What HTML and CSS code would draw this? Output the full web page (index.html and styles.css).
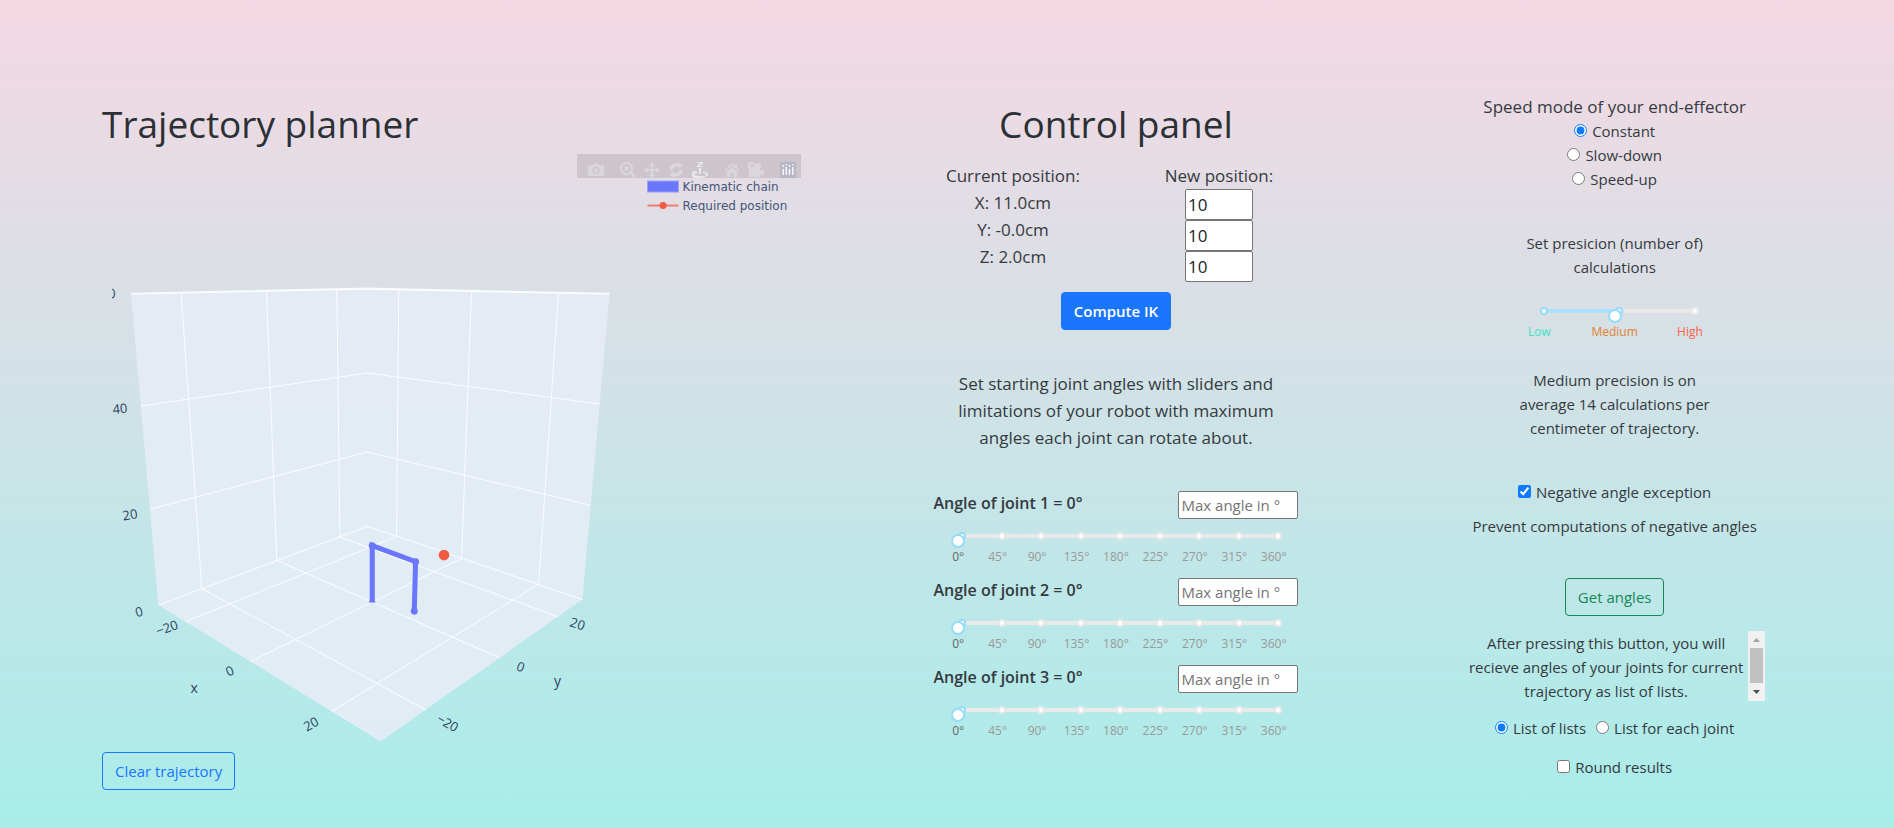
FILE: index.html
```html
<!DOCTYPE html>
<html lang="en">
<head>
<meta charset="utf-8">
<title>Trajectory planner</title>
<meta name="viewport" content="width=device-width, initial-scale=1">
<link rel="stylesheet" href="styles.css">
</head>
<body>
<main class="page">
  <section class="planner">
    <h1>Trajectory planner</h1>
    <div class="plot">
      <svg class="scene" viewBox="112 154 688 590" role="img" aria-label="3D plot of the kinematic chain">
        <defs>
          <clipPath id="plot-area"><rect x="112" y="154" width="688" height="590"/></clipPath>
        </defs>
        <path class="wall" d="M131 294 367 288.500 609 294 582 599 380.300 741 158.300 604.700Z"/>
        <g class="grid">
          <path class="edge" d="M131 293.700 367 288.500 609 293.700"/>
          <path d="M141 405.700 367 372.700 599.300 403.700M150 509 367 451.700 590.200 505M158.300 604.700 367.300 526 582 599"/>
          <path d="M181.100 293 201.700 588.300 425.300 709.300M266.300 291 276.700 560 499.300 657.300M336.600 289.500 339.700 536.700 557.700 616.300"/>
          <path d="M558 293 538.300 583.700 331.700 710.700M471.200 291 461.300 558 250.300 661M398.500 289.500 396.300 536 186 621"/>
        </g>
        <g class="chain">
          <path d="M372 600.700V545.300L415.300 561.300 414 610.700"/>
          <circle cx="372" cy="545.300" r="3.500"/>
          <circle cx="415.300" cy="561.300" r="3.500"/>
          <circle cx="414" cy="610.700" r="3.500"/>
          <path class="foot" d="M368.500 602 370 599h4l1.500 3z"/>
        </g>
        <circle class="target" cx="443.700" cy="554.700" r="5.300"/>
        <g class="tick" clip-path="url(#plot-area)">
          <text transform="translate(108 294) rotate(-2)" dy="4">60</text>
          <text transform="translate(120 409) rotate(-5)" dy="4">40</text>
          <text transform="translate(130 515) rotate(-9)" dy="4">20</text>
          <text transform="translate(139 612) rotate(-14)" dy="4">0</text>
          <text transform="translate(167 628) rotate(-20)" dy="4">−20</text>
          <text transform="translate(230 671) rotate(-24)" dy="4">0</text>
          <text transform="translate(311 724) rotate(-29)" dy="4">20</text>
          <text transform="translate(447 723) rotate(30)" dy="4">−20</text>
          <text transform="translate(520 667) rotate(22)" dy="4">0</text>
          <text transform="translate(577 624) rotate(18)" dy="4">20</text>
          <text class="axis" x="194" y="693">x</text>
          <text class="axis" x="557" y="686">y</text>
        </g>
        <g class="legend">
          <rect x="647" y="181" width="31" height="11"/>
          <text x="682" y="191">Kinematic chain</text>
          <path d="M647 205.500H678"/>
          <circle cx="662.500" cy="205.500" r="3.500"/>
          <text x="682" y="210">Required position</text>
        </g>
      </svg>
      <div class="modebar">
        <button type="button" aria-label="Download plot"><svg viewBox="0 0 16 16"><path d="M5 3 6 1.500h4L11 3h3.500Q16 3 16 4.500v8Q16 14 14.500 14h-13Q0 14 0 12.500v-8Q0 3 1.500 3ZM8 4.800a3.700 3.700 0 1 0 0 7.400 3.700 3.700 0 0 0 0-7.400Zm0 1.500a2.200 2.200 0 1 1 0 4.400 2.200 2.200 0 0 1 0-4.400Z"/></svg></button>
        <button type="button" class="gap" aria-label="Zoom"><svg viewBox="0 0 16 16"><path d="M6.500 0a6.500 6.500 0 1 0 3.700 11.800l4 4 1.700-1.700-4-4A6.500 6.500 0 0 0 6.500 0Zm0 2a4.500 4.500 0 1 1 0 9 4.500 4.500 0 0 1 0-9ZM4.500 4.500v4h4v-4Z"/></svg></button>
        <button type="button" aria-label="Pan"><svg viewBox="0 0 16 16"><path d="m8 0 3 3.500H9V7h3.500V5L16 8l-3.500 3V9H9v3.500h2L8 16l-3-3.500h2V9H3.500v2L0 8l3.500-3v2H7V3.500H5Z"/></svg></button>
        <button type="button" aria-label="Orbital rotation"><svg viewBox="0 0 16 16"><path d="M1 7.500Q1.500 1.500 7.500 1.500H10L9.500 0 14.500 3 11.500 6.500 11 5H8Q5 5 4 9L1 7.500ZM15 8.500Q14.500 14.500 8.500 14.500H6L6.500 16 1.500 13 4.500 9.500 5 11H8Q11 11 12 7L15 8.500Z"/></svg></button>
        <button type="button" class="on" aria-label="Turntable rotation"><svg viewBox="0 0 16 16"><path d="M5 0h6v1.500L7.500 4H11v1H5V3.500L8.500 1H5ZM7 6h2v6H7ZM5 11q-3 .4-3 1.500T8 14t6-1.500-3-1.500V9.500q5 .7 5 3T8 16 0 12.500t5-3Z"/></svg></button>
        <button type="button" class="gap" aria-label="Reset camera"><svg viewBox="0 0 16 16"><path d="m8 1 3 3V2h2v4l3 3-1 1-7-6.500L1 10 0 9ZM8 5l5.500 5v5H9.500v-4h-3v4h-4v-5Z"/></svg></button>
        <button type="button" aria-label="Reset camera to last save"><svg viewBox="0 0 16 16"><path d="M4 0a3.500 3.500 0 0 1 3.200 5A3 3 0 1 1 12 6.500h.5V9L16 7v7l-3.500-2v3H1V7h1A3.500 3.500 0 0 1 4 0Zm0 2a1.500 1.500 0 1 0 0 3 1.500 1.500 0 0 0 0-3Z"/></svg></button>
        <button type="button" class="gap brand" aria-label="Produced with Plotly"><svg viewBox="0 0 16 16"><rect class="tile" width="16" height="16"/><path d="M2.500 7h1.500v6H2.500ZM5.500 5h1.500v8H5.500ZM8.700 7h1.500v6H8.700ZM12 5h1.500v8H12ZM2.500 3H4v2H2.500ZM8.700 3h1.500v2H8.700ZM5.500 2H7v1.500H5.500ZM12 2h1.500v1.500H12Z"/></svg></button>
      </div>
    </div>
    <button type="button" class="btn btn-blue-line">Clear trajectory</button>
  </section>

  <section class="control">
    <h1>Control panel</h1>
    <div class="positions">
      <div class="current">
        <div>Current position:</div>
        <div>X: 11.0cm</div>
        <div>Y: -0.0cm</div>
        <div>Z: 2.0cm</div>
      </div>
      <div class="new">
        <div>New position:</div>
        <input class="coord" type="text" value="10" aria-label="New X">
        <input class="coord" type="text" value="10" aria-label="New Y">
        <input class="coord" type="text" value="10" aria-label="New Z">
      </div>
    </div>
    <button type="button" class="btn btn-primary">Compute IK</button>
    <p class="hint">Set starting joint angles with sliders and limitations of your robot with maximum angles each joint can rotate about.</p>

    <div class="joint">
      <div class="joint-head">
        <label for="joint1">Angle of joint 1 = 0°</label>
        <input class="max" type="text" placeholder="Max angle in °" aria-label="Max angle of joint 1">
      </div>
      <div class="slider">
        <div class="rail"><i class="on"></i><i></i><i></i><i></i><i></i><i></i><i></i><i></i><i></i></div>
        <input id="joint1" type="range" min="0" max="360" value="0">
        <div class="marks"><span class="now">0°</span><span>45°</span><span>90°</span><span>135°</span><span>180°</span><span>225°</span><span>270°</span><span>315°</span><span>360°</span></div>
      </div>
    </div>
    <div class="joint">
      <div class="joint-head">
        <label for="joint2">Angle of joint 2 = 0°</label>
        <input class="max" type="text" placeholder="Max angle in °" aria-label="Max angle of joint 2">
      </div>
      <div class="slider">
        <div class="rail"><i class="on"></i><i></i><i></i><i></i><i></i><i></i><i></i><i></i><i></i></div>
        <input id="joint2" type="range" min="0" max="360" value="0">
        <div class="marks"><span class="now">0°</span><span>45°</span><span>90°</span><span>135°</span><span>180°</span><span>225°</span><span>270°</span><span>315°</span><span>360°</span></div>
      </div>
    </div>
    <div class="joint">
      <div class="joint-head">
        <label for="joint3">Angle of joint 3 = 0°</label>
        <input class="max" type="text" placeholder="Max angle in °" aria-label="Max angle of joint 3">
      </div>
      <div class="slider">
        <div class="rail"><i class="on"></i><i></i><i></i><i></i><i></i><i></i><i></i><i></i><i></i></div>
        <input id="joint3" type="range" min="0" max="360" value="0">
        <div class="marks"><span class="now">0°</span><span>45°</span><span>90°</span><span>135°</span><span>180°</span><span>225°</span><span>270°</span><span>315°</span><span>360°</span></div>
      </div>
    </div>
  </section>

  <section class="options">
    <div class="lead">Speed mode of your end-effector</div>
    <label class="check"><input type="radio" name="speed" checked>Constant</label>
    <label class="check"><input type="radio" name="speed">Slow-down</label>
    <label class="check"><input type="radio" name="speed">Speed-up</label>

    <label class="precision-label" for="precision">Set presicion (number of) calculations</label>
    <div class="slider precision">
      <div class="rail"><i class="on"></i><i class="on"></i><i></i></div>
      <input id="precision" type="range" min="0" max="2" value="1">
      <div class="marks"><span class="low">Low</span><span class="medium">Medium</span><span class="high">High</span></div>
    </div>
    <p class="precision-note">Medium precision is on average 14 calculations per centimeter of trajectory.</p>

    <label class="check"><input type="checkbox" checked>Negative angle exception</label>
    <p class="negative-note">Prevent computations of negative angles</p>

    <button type="button" class="btn btn-green-line">Get angles</button>
    <div class="result">
      <div class="result-text" tabindex="0">After pressing this button, you will recieve angles of your joints for current trajectory as list of lists.</div>
      <div class="scrollbar" aria-hidden="true">
        <svg viewBox="0 0 17 17"><path class="faded" d="M5 11h7L8.500 7z"/></svg>
        <div class="thumb"></div>
        <svg viewBox="0 0 17 17"><path d="M5 6h7l-3.500 4z"/></svg>
      </div>
    </div>
    <div class="formats">
      <label class="check"><input type="radio" name="format" checked>List of lists</label>
      <label class="check"><input type="radio" name="format">List for each joint</label>
    </div>
    <label class="check"><input type="checkbox">Round results</label>
  </section>
</main>
</body>
</html>
```
FILE: styles.css
```css
* {
  box-sizing: border-box;
}

body {
  margin: 0;
  min-height: 100vh;
  background: linear-gradient(#f5d8e3, #a8edea);
  color: #343a40;
  font: 15px/24px "Segoe UI", "Open Sans", "Noto Sans", sans-serif;
}

h1 {
  margin: 0;
  color: #2b3035;
  font-size: 37px;
  font-weight: 400;
  line-height: 48px;
}

p {
  margin: 0;
}

input,
button {
  font-family: inherit;
}

.page {
  display: grid;
  grid-template-columns: 23fr 15fr 15fr;
  padding: 94px 30px 16px 102px;
}

.planner {
  padding-top: 6px;
}

.plot {
  position: relative;
  margin: 6px 66px 7px 10px;
}

.scene {
  display: block;
  width: 100%;
  height: auto;
}

.wall {
  fill: #e5ecf6;
  fill-opacity: 0.9;
}

.grid path {
  fill: none;
  stroke: #fff;
  stroke-opacity: 0.85;
}

.grid .edge {
  stroke-width: 2;
}

.chain path {
  fill: none;
  stroke: #6a76fb;
  stroke-width: 5;
}

.chain circle,
.chain .foot {
  fill: #6a76fb;
  stroke: none;
}

.target {
  fill: #ef5b42;
}

.tick text {
  fill: #2a3f5f;
  font-family: "Open Sans", sans-serif;
  font-size: 13px;
  text-anchor: middle;
}

.tick .axis {
  font-size: 14px;
}

.legend text {
  fill: #44567a;
  font-family: Verdana, "DejaVu Sans", sans-serif;
  font-size: 12px;
}

.legend rect {
  fill: #6a76fb;
  stroke: #9da2f4;
}

.legend path {
  stroke: #ee7f70;
  stroke-width: 2;
}

.legend circle {
  fill: #ef5b42;
}

.modebar {
  position: absolute;
  top: 0;
  right: 0;
  display: flex;
  align-items: flex-end;
  width: 224px;
  height: 24px;
  padding: 0 5px 0 7px;
  background: rgba(68, 68, 68, 0.15);
}

.modebar button {
  display: flex;
  width: 24px;
  padding: 0 4px;
  border: 0;
  background: none;
}

.modebar .gap {
  margin-left: 8px;
}

.modebar svg {
  width: 16px;
  height: 16px;
  fill: #fff;
  fill-rule: evenodd;
  opacity: 0.3;
}

.modebar .on svg {
  opacity: 0.6;
}

.modebar .brand svg {
  opacity: 0.8;
}

.modebar .tile {
  fill: #b3b4ca;
}

.btn {
  height: 38px;
  padding: 0 12px;
  border: 1px solid;
  border-radius: 4px;
  background: none;
  font-size: 15px;
}

.btn-blue-line {
  color: #1a75ff;
}

.btn-green-line {
  border-color: #198754;
  color: #198754;
}

.btn-primary {
  border-color: #1a75ff;
  background: #1a75ff;
  color: #fff;
  font-weight: 600;
}

.control,
.options {
  display: flex;
  flex-direction: column;
  align-items: center;
  text-align: center;
}

.control {
  padding-top: 6px;
}

.positions {
  display: grid;
  grid-template-columns: 206px 206px;
  margin: 14px 0 10px;
  font-size: 17px;
  line-height: 27px;
}

.new {
  display: flex;
  flex-direction: column;
  align-items: center;
}

.coord,
.max {
  padding: 1px 2px;
  border: 1px solid #767676;
  border-radius: 2px;
  background: #fff;
  color: #212529;
  outline: 0;
}

.coord {
  width: 68px;
  height: 31px;
  font-size: 17px;
}

.max {
  width: 120px;
  height: 28px;
  font-size: 15px;
}

.max::placeholder {
  color: #757575;
}

.hint {
  width: 340px;
  margin: 40px 0;
  font-size: 17px;
  line-height: 27px;
}

.joint {
  display: flex;
  flex-direction: column;
  align-items: center;
  width: 365px;
  height: 87px;
}

.joint-head {
  display: flex;
  justify-content: space-between;
  width: 100%;
}

.joint-head label {
  font-size: 16px;
  font-weight: 600;
}

.slider {
  position: relative;
  width: 355px;
  margin-top: 13px;
}

.rail {
  display: flex;
  justify-content: space-between;
  height: 8px;
  margin: 0 11px 0 20px;
  background: linear-gradient(#e9e9e9, #e9e9e9) center / calc(100% - 4px) 4px no-repeat;
}

.rail i {
  width: 8px;
  height: 8px;
  border: 2px solid #e9e9e9;
  border-radius: 50%;
  background: #fff;
}

.rail .on {
  border-color: #96dbfa;
}

.slider input {
  position: absolute;
  top: 2px;
  left: 13px;
  width: 329px;
  height: 14px;
  margin: 0;
  appearance: none;
  background: none;
}

.slider input::-webkit-slider-thumb {
  width: 14px;
  height: 14px;
  border: 2px solid #96dbfa;
  border-radius: 50%;
  appearance: none;
  background: #fff;
}

.marks {
  display: grid;
  grid-auto-columns: 1fr;
  grid-auto-flow: column;
  margin-top: 8px;
  color: #999;
  font-size: 12px;
  line-height: 18px;
}

.marks span {
  text-align: center;
}

.marks .now {
  color: #666;
}

.marks .low {
  color: #40e0c8;
}

.marks .medium {
  color: #e08433;
}

.marks .high {
  color: #ff6347;
}

.lead {
  font-size: 17px;
  line-height: 25px;
}

.check {
  display: flex;
  gap: 5px;
  align-items: flex-start;
}

.check input {
  width: 13px;
  height: 13px;
  margin: 5px 0 0;
  accent-color: #0d7aff;
}

.precision-label {
  width: 190px;
  margin-top: 40px;
}

.precision {
  width: 226px;
  margin-top: 28px;
}

.precision .rail {
  margin: 0 29px 0 38px;
  background:
    linear-gradient(#abe2fb, #abe2fb) 4px center / 50% 4px no-repeat,
    linear-gradient(#e9e9e9, #e9e9e9) center / calc(100% - 4px) 4px no-repeat;
}

.precision input {
  left: 31px;
  width: 165px;
}

.precision-note {
  width: 200px;
  margin: 27px 0 40px;
}

.negative-note {
  margin: 10px 0 40px;
}

.result {
  display: flex;
  width: 300px;
  height: 70px;
  margin: 15px 0;
}

.result-text {
  flex: 1;
  overflow: visible;
}

.scrollbar {
  display: flex;
  flex-direction: column;
  justify-content: space-between;
  width: 17px;
  background: #f1f1f1;
}

.scrollbar svg {
  display: block;
  height: 17px;
  fill: #505050;
}

.scrollbar .faded {
  fill: #a3a3a3;
}

.thumb {
  flex: 1;
  margin: 0 2px 1px;
  background: #c1c1c1;
}

.formats {
  display: flex;
  gap: 10px;
  margin-bottom: 15px;
}
```
